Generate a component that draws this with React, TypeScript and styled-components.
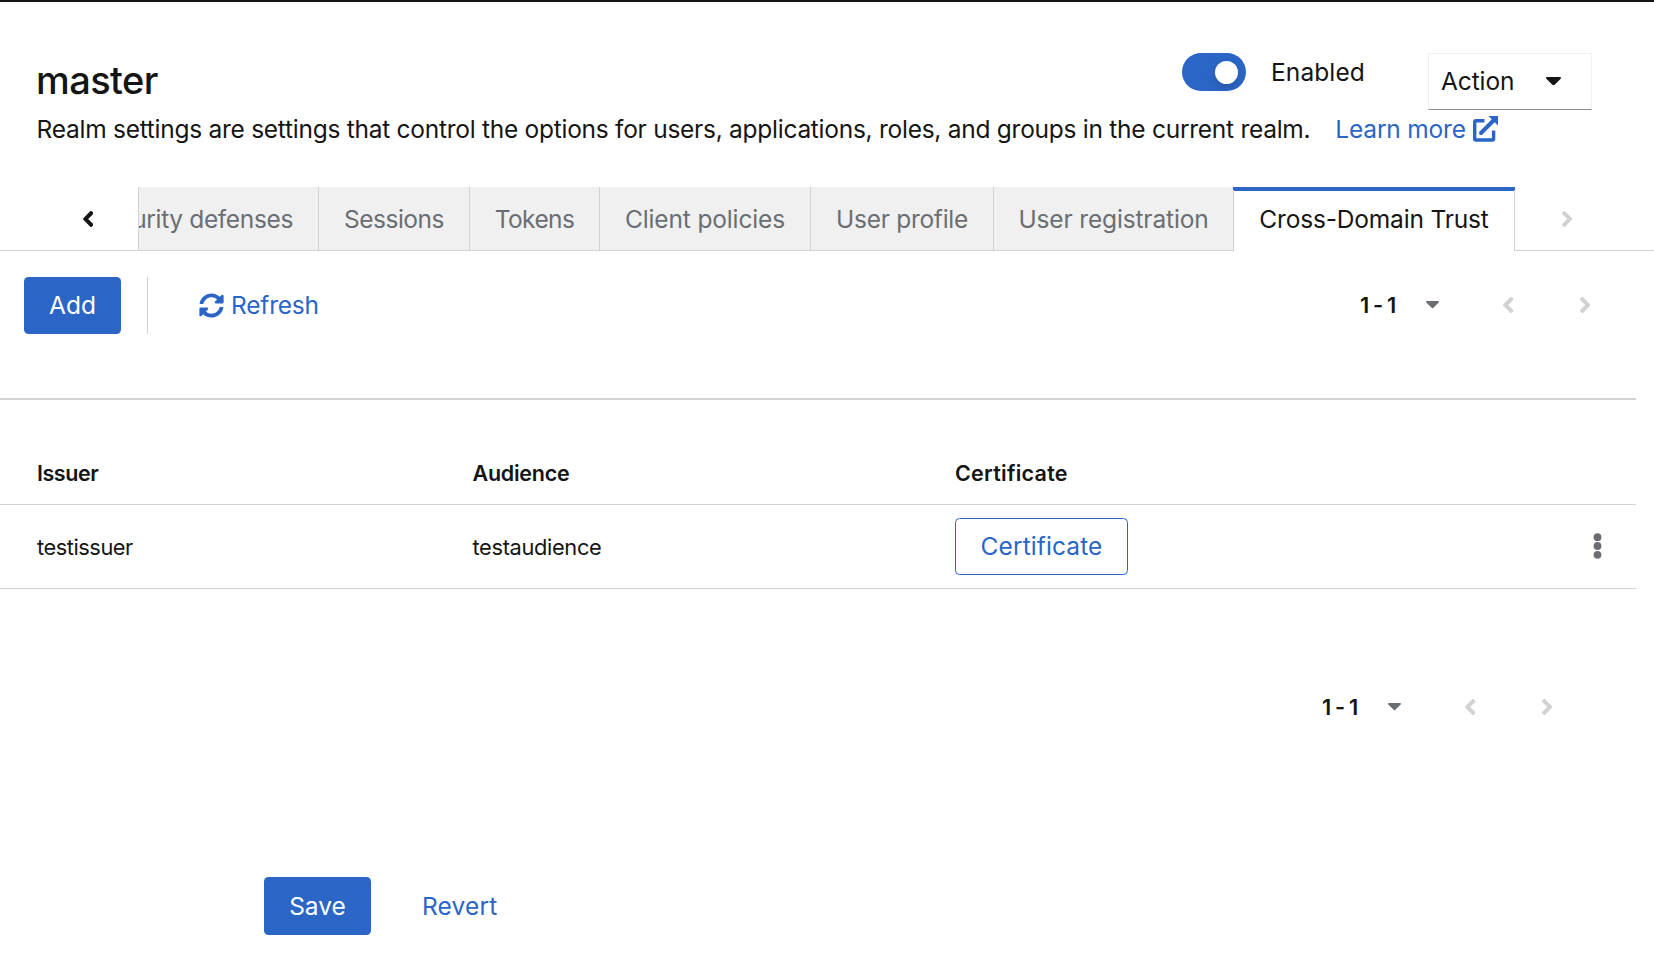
import React from "react";
import styled, { createGlobalStyle } from "styled-components";
import { FaSyncAlt } from "react-icons/fa";

const BLUE = "#2b66c6";
const INK = "#151515";
const GREY = "#6a6e73";
const LINE = "#d2d2d2";

const GlobalStyle = createGlobalStyle`
  * { box-sizing: border-box; }
  body {
    margin: 0;
    background: #fff;
    color: ${INK};
    font-family: Inter, "Liberation Sans", sans-serif;
    font-size: 24.5px;
  }
  button { font: inherit; color: inherit; background: none; border: 0; padding: 0; margin: 0; }
  svg { display: block; flex: none; }
`;

const Page = styled.div`
  width: 1654px;
  height: 956px;
  overflow: hidden;
  border-top: 2px solid ${INK};
`;

const Label = styled.span<{ $track?: number }>`
  letter-spacing: ${(p) => p.$track ?? 0}px;
  white-space: nowrap;
`;

const Header = styled.header`
  padding: 51px 62px 39px 36px;
`;

const TitleRow = styled.div`
  display: flex;
  align-items: center;
  justify-content: space-between;
  height: 57px;
`;

const Title = styled.h1`
  margin: 0;
  padding-bottom: 2px;
  font-size: 38px;
  font-weight: 500;
  line-height: 55px;
  letter-spacing: -0.6px;
`;

const Controls = styled.div`
  display: flex;
  align-items: flex-start;
`;

const SwitchField = styled.label`
  display: flex;
  align-items: center;
  gap: 25px;
  width: 246px;
  height: 38px;
`;

const SwitchTrack = styled.span`
  display: flex;
  align-items: center;
  justify-content: flex-end;
  width: 64px;
  height: 38px;
  padding-right: 8px;
  border-radius: 19px;
  background: ${BLUE};
`;

const SwitchKnob = styled.span`
  width: 23px;
  height: 23px;
  border-radius: 50%;
  background: #fff;
  box-shadow: 0 5px 10px rgba(3, 3, 3, 0.14);
`;

const ActionButton = styled.button`
  display: flex;
  align-items: center;
  justify-content: space-between;
  width: 164px;
  height: 57px;
  padding: 0 30px 1px 12px;
  border: 1px solid #f0f0f0;
  border-bottom-color: #8a8d90;
`;

const Description = styled.p`
  display: flex;
  margin: 0 0 0 0.6px;
  height: 38px;
  line-height: 38px;
`;

const LearnMore = styled.a`
  display: flex;
  align-items: center;
  gap: 7px;
  margin-left: 25px;
  color: ${BLUE};
`;

const TabBar = styled.nav`
  display: flex;
  height: 64px;
  background: linear-gradient(${LINE}, ${LINE}) bottom / 100% 1px no-repeat;
`;

const ScrollButton = styled.button<{ $width: number; $pad: number; $off?: boolean }>`
  display: flex;
  align-items: center;
  width: ${(p) => p.$width}px;
  padding-left: ${(p) => p.$pad}px;
  color: ${(p) => (p.$off ? LINE : INK)};
`;

const Tab = styled.button<{ $width: number; $clipped?: boolean }>`
  display: flex;
  align-items: center;
  justify-content: ${(p) => (p.$clipped ? "flex-end" : "center")};
  width: ${(p) => p.$width}px;
  height: 64px;
  padding-right: ${(p) => (p.$clipped ? 25 : 0)}px;
  overflow: hidden;
  background: #f0f0f0;
  color: ${GREY};
  border-left: 1px solid ${LINE};
  border-bottom: 1px solid ${LINE};
`;

const ActiveTab = styled(Tab)`
  background: #fff;
  color: ${INK};
  border-right: 1px solid ${LINE};
  border-bottom: 0;
  border-image: linear-gradient(${BLUE} 4px, ${LINE} 4px) 1;
  box-shadow: inset 0 4px 0 ${BLUE};
`;

const Toolbar = styled.div`
  display: flex;
  align-items: flex-start;
  height: 149px;
  margin-right: 18px;
  padding: 26px 46px 0 24px;
  border-bottom: 2px solid ${LINE};
`;

const Button = styled.button<{ $width: number; $height?: number }>`
  width: ${(p) => p.$width}px;
  height: ${(p) => p.$height ?? 57}px;
  padding-bottom: 1px;
  border-radius: 4.5px;
  background: ${BLUE};
  color: #fff;
`;

const OutlineButton = styled(Button)`
  background: #fff;
  color: ${BLUE};
  border: 1.5px solid ${BLUE};
`;

const LinkButton = styled.button`
  display: flex;
  align-items: center;
  gap: 7px;
  height: 57px;
  padding-bottom: 1px;
  color: ${BLUE};
`;

const Divider = styled.span`
  width: 1px;
  height: 57px;
  margin: 0 51px 0 26px;
  background: ${LINE};
`;

const Pager = styled.div`
  display: flex;
  align-items: center;
  width: 231px;
  height: 57px;
  margin-left: auto;
  padding-bottom: 1px;
  color: ${LINE};
`;

const PagerRange = styled.span`
  width: 68px;
  padding-left: 1px;
  font-size: 21.8px;
  font-weight: 600;
  letter-spacing: -0.85px;
  color: ${INK};
`;

const PagerCaret = styled.span`
  margin-right: 64px;
  color: ${GREY};
`;

const PagerStep = styled.span`
  margin-right: 66px;
`;

const Row = styled.div`
  display: grid;
  grid-template-columns: 435.5px 482.5px 638px 10px;
  align-items: center;
  height: 84px;
  margin-right: 18px;
  padding-left: 37px;
  border-bottom: 1px solid ${LINE};
  font-size: 21.8px;
`;

const HeadRow = styled(Row)`
  height: 105px;
  padding-top: 41px;
  font-size: 21.5px;
  font-weight: 600;
`;

const CellAction = styled.div`
  display: flex;
  font-size: 24.5px;
`;

const CellMenu = styled.div`
  padding-bottom: 2px;
`;

const BottomBar = styled.div`
  display: flex;
  padding: 90px 102px 0 0;
`;

const FormActions = styled.div`
  display: flex;
  align-items: center;
  gap: 51px;
  padding: 141px 0 0 264px;
`;

function Angle({ right }: { right?: boolean }) {
  return (
    <svg width="10.4" height="16" viewBox="24.6 96 207 320" fill="currentColor">
      <path
        transform={right ? "translate(256.2 0) scale(-1 1)" : undefined}
        d="M31.7 239l136-136c9.4-9.4 24.6-9.4 33.9 0l22.6 22.6c9.4 9.4 9.4 24.6 0 33.9L127.9 256l96.4 96.4c9.4 9.4 9.4 24.6 0 33.9L201.7 409c-9.4 9.4-24.6 9.4-33.9 0l-136-136c-9.5-9.4-9.5-24.6-.1-34z"
      />
    </svg>
  );
}

function Caret({ width }: { width: number }) {
  return (
    <svg width={width} height={width * 0.567} viewBox="11 192 298 169" fill="currentColor">
      <path d="M31.3 192h257.3c17.8 0 26.7 21.5 14.1 34.1L174.1 354.7c-7.8 7.8-20.5 7.8-28.3 0L17.2 226.1C4.6 213.5 13.5 192 31.3 192z" />
    </svg>
  );
}

function ExternalLink() {
  return (
    <svg width="25" height="26" viewBox="0 0 25 26" fill="none" stroke="currentColor">
      <path d="M11.5 4.8H2.8Q1.7 4.8 1.7 5.9V22.8Q1.7 24 2.8 24H19.4Q20.6 24 20.6 22.8V14.5" strokeWidth="3.4" />
      <path d="M8 17L21 4" strokeWidth="4" strokeLinecap="round" />
      <path d="M15.5 0H25V9.5Z" fill="currentColor" stroke="none" />
    </svg>
  );
}

function Kebab() {
  return (
    <svg width="9" height="26" viewBox="0 0 9 26" fill={GREY}>
      <circle cx="4.5" cy="4.2" r="3.9" />
      <circle cx="4.5" cy="13" r="3.9" />
      <circle cx="4.5" cy="21.8" r="3.9" />
    </svg>
  );
}

function Pagination() {
  return (
    <Pager>
      <PagerRange>1 - 1</PagerRange>
      <PagerCaret><Caret width={13} /></PagerCaret>
      <PagerStep><Angle /></PagerStep>
      <Angle right />
    </Pager>
  );
}

const tabs = [
  { name: "Security defenses", width: 180, track: -0.35, clipped: true },
  { name: "Sessions", width: 151, track: -0.5 },
  { name: "Tokens", width: 130, track: -0.6 },
  { name: "Client policies", width: 211, track: -0.14 },
  { name: "User profile", width: 183, track: -0.28 },
  { name: "User registration", width: 240, track: -0.15 },
];

export default function App() {
  return (
    <Page>
      <GlobalStyle />
      <Header>
        <TitleRow>
          <Title>master</Title>
          <Controls>
            <SwitchField>
              <SwitchTrack><SwitchKnob /></SwitchTrack>
              <Label $track={0.1}>Enabled</Label>
            </SwitchField>
            <ActionButton>
              <Label $track={-0.1}>Action</Label>
              <Caret width={15} />
            </ActionButton>
          </Controls>
        </TitleRow>
        <Description>
          <Label $track={-0.265}>
            Realm settings are settings that control the options for users, applications, roles, and groups in the current realm.
          </Label>
          <LearnMore>
            <Label $track={-0.2}>Learn more</Label>
            <ExternalLink />
          </LearnMore>
        </Description>
      </Header>
      <TabBar>
        <ScrollButton $width={138} $pad={82.5}><Angle /></ScrollButton>
        {tabs.map((t) => (
          <Tab key={t.name} $width={t.width} $clipped={t.clipped}>
            <Label $track={t.track}>{t.name}</Label>
          </Tab>
        ))}
        <ActiveTab $width={282}>
          <Label $track={-0.18}>Cross-Domain Trust</Label>
        </ActiveTab>
        <ScrollButton $width={139} $pad={47} $off><Angle right /></ScrollButton>
      </TabBar>
      <Toolbar>
        <Button $width={97}>Add</Button>
        <Divider />
        <LinkButton>
          <FaSyncAlt size={25} />
          <Label $track={-0.2}>Refresh</Label>
        </LinkButton>
        <Pagination />
      </Toolbar>
      <HeadRow>
        <Label $track={-0.45}>Issuer</Label>
        <Label $track={-0.25}>Audience</Label>
        <Label $track={0.25}>Certificate</Label>
      </HeadRow>
      <Row>
        <Label $track={-0.45}>testissuer</Label>
        <Label $track={-0.33}>testaudience</Label>
        <CellAction>
          <OutlineButton $width={173}><Label $track={0.1}>Certificate</Label></OutlineButton>
        </CellAction>
        <CellMenu><Kebab /></CellMenu>
      </Row>
      <BottomBar><Pagination /></BottomBar>
      <FormActions>
        <Button $width={107} $height={58}>Save</Button>
        <LinkButton><Label $track={0.15}>Revert</Label></LinkButton>
      </FormActions>
    </Page>
  );
}
